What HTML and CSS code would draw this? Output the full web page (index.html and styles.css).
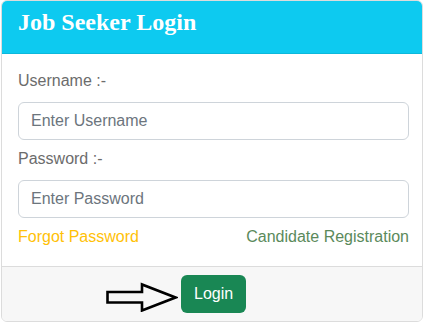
FILE: index.html
```html
<!DOCTYPE html>
<html>
<head>
<meta charset="utf-8">
<link rel="stylesheet" href="styles.css">
</head>
<body>
<div class="card">
  <div class="card-header">
    <h4 class="title">Job Seeker Login</h4>
  </div>
  <div class="card-body">
    <label class="label">Username :-</label>
    <input class="field" type="text" placeholder="Enter Username">
    <label class="label">Password :-</label>
    <input class="field" type="password" placeholder="Enter Password">
    <div class="links">
      <a class="forgot" href="#">Forgot Password</a>
      <a class="register" href="#">Candidate Registration</a>
    </div>
  </div>
  <div class="card-footer">
    <svg class="arrow" width="72" height="30" viewBox="0 0 72 30">
      <polygon points="1.5,10 36,10 36,2.5 69.5,15.5 36,28.5 36,20.5 1.5,20.5" fill="none" stroke="#000" stroke-width="2.6" stroke-linejoin="miter"/>
    </svg>
    <button class="btn-login">Login</button>
  </div>
</div>
</body>
</html>
```

FILE: styles.css
```css
* { box-sizing: border-box; }
html, body { margin: 0; padding: 0; background: #fff; }
body { font-family: "Liberation Sans", Arial, sans-serif; }

.card {
  width: 422px;
  margin-left: 1px;
  border: 1px solid #dcdcdc;
  border-radius: 6px;
  overflow: hidden;
  background: #fff;
}

.card-header {
  margin: -1px -1px 0;
  background: #0dcaf0;
  border-bottom: 1px solid #0cb8db;
  padding: 8px 16px 8px 17px;
  border-radius: 6px 6px 0 0;
}

.title {
  margin: 0 0 8px;
  font-family: "Liberation Serif", "Times New Roman", serif;
  font-weight: bold;
  font-size: 24px;
  line-height: 29px;
  color: #fff;
}

.card-body {
  padding: 15px 13px 17px 16px;
  display: flex;
  flex-direction: column;
}

.label {
  display: block;
  font-size: 16px;
  line-height: 24px;
  color: #6c6c6c;
  margin-bottom: 9px;
}

.field {
  display: block;
  width: 100%;
  height: 38px;
  border: 1px solid #ced4da;
  border-radius: 6px;
  padding: 0 12px;
  font-family: "Liberation Sans", Arial, sans-serif;
  font-size: 16px;
  color: #212529;
  margin-bottom: 7px;
  outline: none;
}
.field::placeholder { color: #6c757d; opacity: 1; }

.links {
  display: flex;
  justify-content: space-between;
  font-size: 16px;
  line-height: 24px;
}
.links a { text-decoration: none; }
.forgot { color: #ffc107; }
.register { color: #5b8a5b; }

.card-footer {
  border-top: 1px solid #dcdcdc;
  background: #f7f7f7;
  padding: 8px 0 8px 104px;
  display: flex;
  align-items: flex-start;
}

.arrow {
  display: block;
  margin-top: 7px;
  margin-right: 3px;
}

.btn-login {
  height: 38px;
  padding: 0 13px;
  border: none;
  border-radius: 6px;
  background: #198754;
  color: #fff;
  font-family: "Liberation Sans", Arial, sans-serif;
  font-size: 16px;
  line-height: 38px;
}
```
